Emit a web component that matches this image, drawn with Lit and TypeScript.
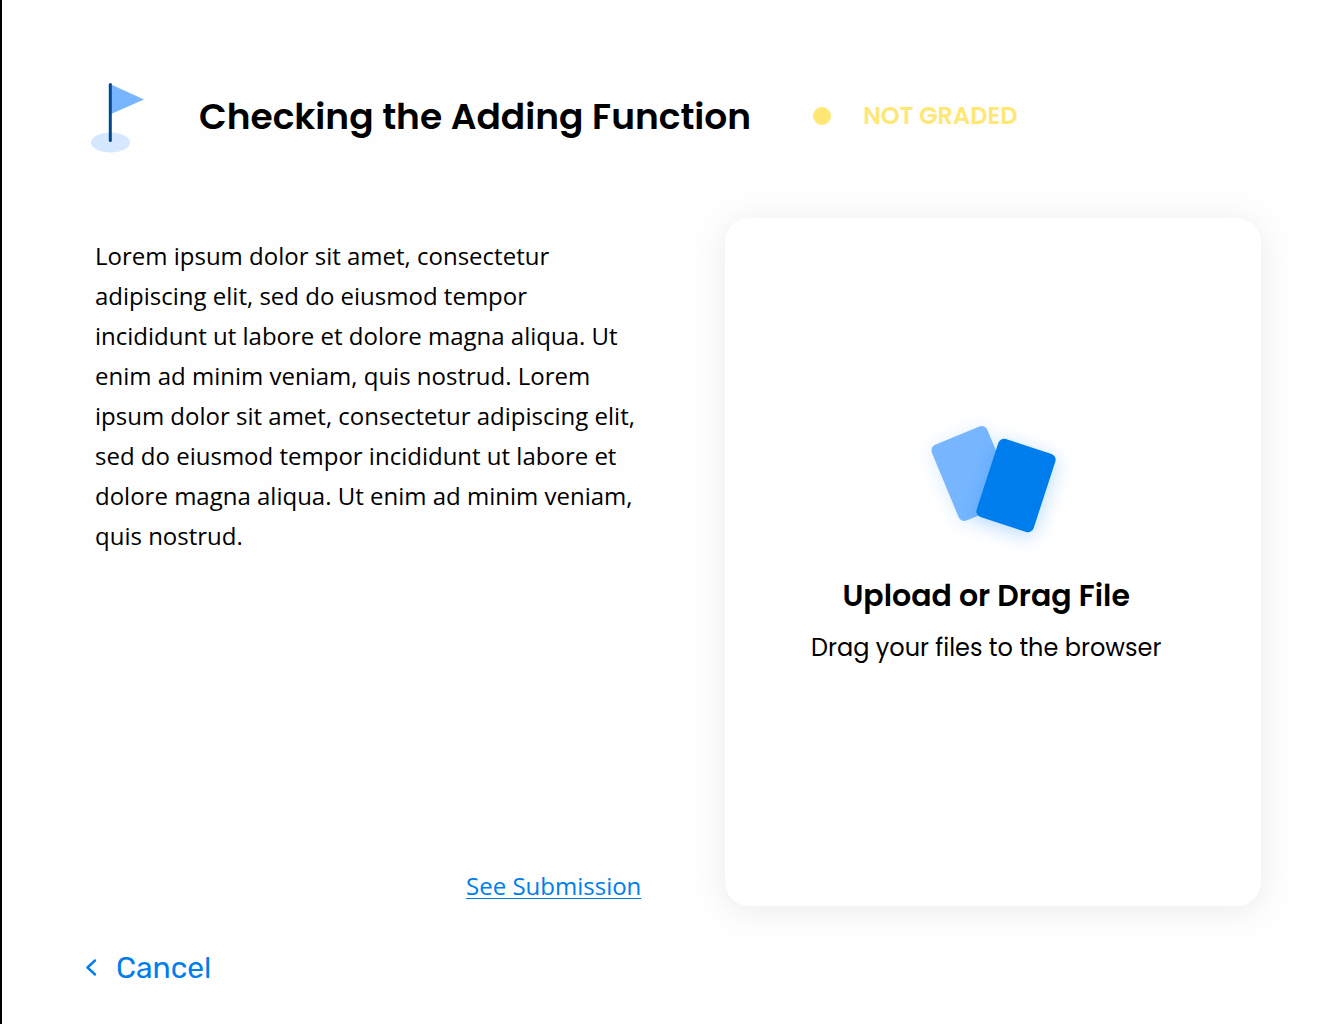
import { LitElement, html, css } from "lit";
import { customElement, property, state } from "lit/decorators.js";

@customElement("flag-icon")
class FlagIcon extends LitElement {
  static styles = css`
    :host {
      display: block;
      line-height: 0;
    }
  `;

  render() {
    return html`
      <svg width="56" height="72" viewBox="0 0 56 72" aria-hidden="true">
        <ellipse cx="19.5" cy="61.5" rx="19.5" ry="10" fill="#d6e8ff" />
        <path d="M20 3.5 53 18.5 20 33Z" fill="#77b6ff" />
        <path d="M19.3 3.5V59.5" stroke="#00488b" stroke-width="3" stroke-linecap="round" />
      </svg>
    `;
  }
}

@customElement("files-icon")
class FilesIcon extends LitElement {
  static styles = css`
    :host {
      display: block;
      line-height: 0;
    }
    .art {
      overflow: visible;
    }
    .back {
      fill: #77b6ff;
      filter: drop-shadow(0 2px 10px rgba(0, 125, 236, 0.14));
    }
    .front {
      fill: #007dec;
      filter: drop-shadow(0 4px 10px rgba(0, 125, 236, 0.28));
    }
  `;

  render() {
    return html`
      <svg class="art" width="128" height="110" viewBox="0 0 128 110" aria-hidden="true">
        <g class="back">
          <rect x="14" y="8.5" width="60" height="82" rx="6" transform="rotate(-22.5 44 49.5)" />
        </g>
        <g class="front">
          <rect x="57" y="20.5" width="60" height="82" rx="6" transform="rotate(18 87 61.5)" />
        </g>
      </svg>
    `;
  }
}

@customElement("grade-status")
class GradeStatus extends LitElement {
  @property() label = "";

  static styles = css`
    :host {
      display: flex;
      align-items: center;
      gap: 32px;
      padding-bottom: 2px;
      color: #ffe775;
      font: 600 24px/32px Poppins, Inter, "Liberation Sans", sans-serif;
    }
    .dot {
      width: 18px;
      height: 18px;
      border-radius: 50%;
      background: currentColor;
    }
  `;

  render() {
    return html`<span class="dot"></span><span>${this.label}</span>`;
  }
}

@customElement("upload-card")
class UploadCard extends LitElement {
  @state() private fileName = "";

  static styles = css`
    :host {
      display: flex;
    }
    .card {
      flex: 1;
      display: flex;
      flex-direction: column;
      align-items: center;
      justify-content: center;
      box-sizing: border-box;
      padding: 24px 24px 58px;
      border-radius: 24px;
      background: #ffffff;
      box-shadow: 0 4px 32px rgba(0, 0, 0, 0.08);
      color: #000000;
      text-align: center;
      font-family: Poppins, Inter, "Liberation Sans", sans-serif;
      cursor: pointer;
    }
    .picker {
      width: 1px;
      height: 1px;
      margin: 0;
      opacity: 0;
    }
    .text {
      display: flex;
      flex-direction: column;
      gap: 12px;
      margin-top: 40px;
      padding-right: 14px;
    }
    .title {
      font-size: 30px;
      font-weight: 600;
      line-height: 44px;
    }
    .hint {
      font-size: 24px;
      line-height: 36px;
    }
  `;

  private accept(files: FileList | null | undefined) {
    if (files && files.length) this.fileName = files[0].name;
  }

  private onChange(e: Event) {
    this.accept((e.target as HTMLInputElement).files);
  }

  private onDrop(e: DragEvent) {
    e.preventDefault();
    this.accept(e.dataTransfer?.files);
  }

  render() {
    return html`
      <label
        class="card"
        for="file"
        @dragover=${(e: DragEvent) => e.preventDefault()}
        @drop=${this.onDrop}
      >
        <files-icon></files-icon>
        <span class="text">
          <span class="title">Upload or Drag File</span>
          <span class="hint">${this.fileName || "Drag your files to the browser"}</span>
        </span>
        <input class="picker" id="file" type="file" @change=${this.onChange} />
      </label>
    `;
  }
}

@customElement("app-root")
class AppRoot extends LitElement {
  static styles = css`
    :host {
      display: block;
      color: #000000;
      background: #fefefe;
    }
    .page {
      display: flex;
      flex-direction: column;
      box-sizing: border-box;
      min-height: 100vh;
      padding: 81px 75px 36px 84px;
      border-left: 2px solid #000000;
    }
    .header {
      display: flex;
      align-items: center;
      padding-left: 5px;
    }
    .heading {
      margin: 0 62px 0 52px;
      font: 600 36px/54px Poppins, Inter, "Liberation Sans", sans-serif;
    }
    .content {
      flex: 1;
      display: grid;
      grid-template-columns: minmax(0, 51fr) minmax(0, 50fr);
      gap: 84px;
      margin-top: 65px;
      padding-left: 9px;
    }
    .brief {
      display: flex;
      flex-direction: column;
      justify-content: space-between;
      padding-top: 18px;
      font: 400 24px/40px "Open Sans", "Noto Sans", sans-serif;
    }
    .copy {
      margin: 0;
    }
    .submission {
      align-self: flex-end;
      color: #007dec;
      text-decoration-thickness: 1px;
      text-underline-offset: 3px;
    }
    .cancel {
      align-self: flex-start;
      display: flex;
      align-items: center;
      gap: 20px;
      margin-top: 42px;
      padding: 0;
      border: 0;
      background: none;
      color: #007dec;
      font: 400 30px/40px Rubik, Roboto, "Liberation Sans", sans-serif;
      cursor: pointer;
    }
  `;

  render() {
    return html`
      <main class="page">
        <header class="header">
          <flag-icon></flag-icon>
          <h1 class="heading">Checking the Adding Function</h1>
          <grade-status label="NOT GRADED"></grade-status>
        </header>
        <section class="content">
          <div class="brief">
            <p class="copy">
              Lorem ipsum dolor sit amet, consectetur adipiscing elit, sed do eiusmod tempor
              incididunt ut labore et dolore magna aliqua. Ut enim ad minim veniam, quis nostrud.
              Lorem ipsum dolor sit amet, consectetur adipiscing elit, sed do eiusmod tempor
              incididunt ut labore et dolore magna aliqua. Ut enim ad minim veniam, quis nostrud.
            </p>
            <a class="submission" href="#submission">See Submission</a>
          </div>
          <upload-card></upload-card>
        </section>
        <button class="cancel" type="button">
          <svg width="10" height="18" viewBox="0 0 10 18" aria-hidden="true">
            <path
              d="M9 1.5 1.5 8.5 9 15.5"
              fill="none"
              stroke="currentColor"
              stroke-width="2.4"
              stroke-linecap="round"
              stroke-linejoin="round"
            />
          </svg>
          <span>Cancel</span>
        </button>
      </main>
    `;
  }
}
